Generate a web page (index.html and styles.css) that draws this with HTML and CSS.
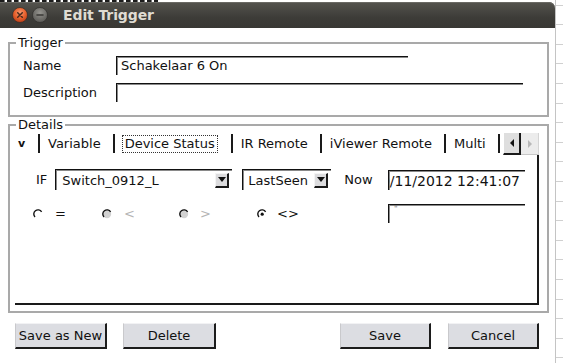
FILE: index.html
```html
<!DOCTYPE html>
<html>
<head>
<meta charset="utf-8">
<link rel="stylesheet" href="styles.css">
</head>
<body>
<div class="window">
  <div class="desk-top"></div>
  <div class="titlebar">
    <span class="wbtn">
      <svg width="16" height="16" viewBox="0 0 16 16"><defs><radialGradient id="cg" cx="50%" cy="35%" r="65%"><stop offset="0" stop-color="#f79a72"/><stop offset="0.55" stop-color="#e8622e"/><stop offset="1" stop-color="#b93e18"/></radialGradient></defs><circle cx="8" cy="8" r="7.5" fill="url(#cg)" stroke="#2a2926" stroke-width="0.6"/><path d="M5.7 5.7l4.6 4.6M10.3 5.7l-4.6 4.6" stroke="#4a2a1c" stroke-width="1.5" stroke-linecap="round"/></svg>
    </span>
    <span class="wbtn">
      <svg width="16" height="16" viewBox="0 0 16 16"><defs><radialGradient id="mg" cx="50%" cy="35%" r="65%"><stop offset="0" stop-color="#95948f"/><stop offset="1" stop-color="#5a5955"/></radialGradient></defs><circle cx="8" cy="8" r="7.5" fill="url(#mg)" stroke="#2a2926" stroke-width="0.6"/><path d="M5 8h6" stroke="#3a3936" stroke-width="1.6" stroke-linecap="round"/></svg>
    </span>
    <span class="title">Edit Trigger</span>
  </div>
  <div class="dialog">
    <fieldset class="group">
      <legend>Trigger</legend>
      <div class="form">
        <span class="lbl">Name</span><div class="input name">Schakelaar 6 On</div>
        <span class="lbl">Description</span><div class="input desc"></div>
      </div>
    </fieldset>
    <fieldset class="group">
      <legend>Details</legend>
      <div class="details-body">
        <div class="tabrow">
          <div class="tabs">
            <span class="tab first">v</span>
            <span class="tab">Variable</span>
            <span class="tab selected"><span class="focus">Device Status</span></span>
            <span class="tab">IR Remote</span>
            <span class="tab">iViewer Remote</span>
            <span class="tab">Multi</span>
            <span class="tab empty"></span>
          </div>
          <div class="scroll">
            <span class="sbtn prev"><svg width="6" height="8" viewBox="0 0 6 8"><path d="M5 0v8L1 4z" fill="#111"/></svg></span>
            <span class="sbtn next"><svg width="6" height="8" viewBox="0 0 6 8"><path d="M1 0v8l4-4z" fill="#b8b8b8"/></svg></span>
          </div>
        </div>
        <div class="panel">
          <div class="row cond">
            <span class="txt if">IF</span>
            <div class="combo device"><span class="ctext">Switch_0912_L</span><span class="arrow"><svg width="8" height="5" viewBox="0 0 8 5"><path d="M0 0h8L4 5z" fill="#111"/></svg></span></div>
            <div class="combo prop"><span class="ctext">LastSeen</span><span class="arrow"><svg width="8" height="5" viewBox="0 0 8 5"><path d="M0 0h8L4 5z" fill="#111"/></svg></span></div>
            <span class="txt now">Now</span>
            <div class="field time"><span class="ftext">9/11/2012 12:41:07</span></div>
          </div>
          <div class="row ops">
            <span class="radio r1"><svg width="10" height="10" viewBox="0 0 10 10"><circle cx="5" cy="5" r="4.2" fill="#fff"/><path d="M2 8A4.2 4.2 0 1 1 8.6 2.9" fill="none" stroke="#111" stroke-width="1.4"/></svg><span>=</span></span>
            <span class="radio r2 dis"><svg width="10" height="10" viewBox="0 0 10 10"><circle cx="5" cy="5" r="4.2" fill="#d2d2d2"/><path d="M2 8A4.2 4.2 0 1 1 8.6 2.9" fill="none" stroke="#111" stroke-width="1.4"/></svg><span>&lt;</span></span>
            <span class="radio r3 dis"><svg width="10" height="10" viewBox="0 0 10 10"><circle cx="5" cy="5" r="4.2" fill="#d2d2d2"/><path d="M2 8A4.2 4.2 0 1 1 8.6 2.9" fill="none" stroke="#111" stroke-width="1.4"/></svg><span>&gt;</span></span>
            <span class="radio r4"><svg width="10" height="10" viewBox="0 0 10 10"><circle cx="5" cy="5" r="4.2" fill="#fff"/><path d="M2 8A4.2 4.2 0 1 1 8.6 2.9" fill="none" stroke="#111" stroke-width="1.4"/><circle cx="5.2" cy="5.2" r="1.6" fill="#111"/></svg><span>&lt;&gt;</span></span>
            <div class="field value"><span class="mark">"</span></div>
          </div>
        </div>
      </div>
    </fieldset>
    <div class="actions">
      <div class="btns">
        <button class="btn w-new">Save as New</button>
        <button class="btn w-del">Delete</button>
      </div>
      <div class="btns right">
        <button class="btn w-save">Save</button>
        <button class="btn w-cancel">Cancel</button>
      </div>
    </div>
  </div>
</div>
<div class="desk-strip"></div>
</body>
</html>
```

FILE: styles.css
```css
html, body {
  margin: 0;
  padding: 0;
}
body {
  width: 563px;
  height: 363px;
  overflow: hidden;
  display: flex;
  background: #fff;
  font-family: "DejaVu Sans", "Liberation Sans", sans-serif;
  font-size: 13px;
  color: #111;
}
.window {
  width: 555px;
  flex: none;
  display: flex;
  flex-direction: column;
}
.desk-top {
  height: 2px;
  background: repeating-linear-gradient(90deg, #1c1c1c 0 4px, #777 4px 5px, #fff 5px 7px) 0 0 / 158px 2px no-repeat;
}
.titlebar {
  height: 26px;
  flex: none;
  display: flex;
  align-items: center;
  padding-left: 12px;
  background: linear-gradient(#54534e, #3d3c38 60%, #393834);
  border-top-right-radius: 6px;
  box-shadow: inset 0 1px 0 #6a6964;
}
.wbtn {
  width: 16px;
  height: 16px;
  margin-right: 4px;
  display: flex;
}
.title {
  margin-left: 11px;
  color: #dfdbd2;
  font-weight: bold;
  font-size: 14px;
  letter-spacing: -0.1px;
}
.dialog {
  flex: 1;
  background: #fff;
  padding-top: 7px;
}
.group {
  margin: 0 6px 0 8px;
  padding: 0;
  border: 2px solid #a9a9a9;
  min-width: 0;
}
.group legend {
  margin-left: 6px;
  padding: 0 2px;
  line-height: 16px;
  font-size: 13px;
}
.form {
  display: grid;
  grid-template-columns: 93px auto;
  row-gap: 8px;
  align-items: center;
  padding: 5px 0 13px 13px;
}
.input {
  height: 19px;
  box-sizing: border-box;
  border-top: 1px solid #111;
  border-left: 1px solid #111;
  box-shadow: inset 1px 1px 0 #8a8a8a;
  padding-left: 4px;
  line-height: 18px;
  justify-self: start;
}
.input.name { width: 292px; }
.input.desc { width: 407px; }

.details-body {
  padding: 0 8px 6px 5px;
}
.tabrow {
  display: flex;
  height: 22px;
}
.tabs {
  flex: 1;
  min-width: 0;
  display: flex;
  overflow: hidden;
}
.tab {
  flex: none;
  height: 19px;
  margin-top: 1px;
  line-height: 19px;
  border-left: 2px solid #1a1a1a;
  padding: 0 12px 0 8px;
  white-space: nowrap;
}
.tab.first {
  border-left: none;
  width: 23px;
  box-sizing: border-box;
  padding: 0 0 0 3px;
  font-weight: bold;
  font-size: 11px;
}
.tab.selected {
  padding: 0 13px 0 7px;
}
.tab.empty {
  width: 20px;
  padding: 0;
}
.focus {
  display: inline-block;
  border: 1px dotted #333;
  padding: 0 2px;
  line-height: 16px;
}
.scroll {
  width: 36px;
  flex: none;
  display: flex;
}
.sbtn {
  width: 18px;
  height: 22px;
  box-sizing: border-box;
  display: flex;
  align-items: center;
  justify-content: center;
}
.sbtn.prev {
  background: #dedede;
  border-left: 1px solid #fff;
  border-right: 2px solid #1a1a1a;
  border-bottom: 2px solid #1a1a1a;
}
.sbtn.next {
  background: #ececec;
  border-bottom: 1px solid #c8c8c8;
  border-right: 1px solid #d4d4d4;
}
.panel {
  height: 150px;
  box-sizing: border-box;
  border-right: 2px solid #1a1a1a;
  border-bottom: 2px solid #1a1a1a;
  padding: 14px 12px 0 0;
}
.row {
  display: flex;
  align-items: flex-start;
}
.row.cond {
  padding-left: 21px;
  height: 21px;
}
.txt {
  line-height: 21px;
}
.combo {
  height: 21px;
  box-sizing: border-box;
  display: flex;
  align-items: center;
  border-top: 1px solid #111;
  border-left: 1px solid #111;
  box-shadow: inset 1px 1px 0 #8a8a8a;
  padding: 0 3px 0 6px;
}
.combo.device { width: 177px; margin-left: 8px; }
.combo.prop { width: 89px; margin-left: 10px; padding-left: 5px; }
.ctext { flex: 1; white-space: nowrap; }
.arrow {
  width: 14px;
  height: 15px;
  box-sizing: border-box;
  background: #dcdcde;
  border-top: 1px solid #f4f4f4;
  border-left: 1px solid #f4f4f4;
  border-right: 2px solid #1a1a1a;
  border-bottom: 2px solid #1a1a1a;
  display: flex;
  align-items: center;
  justify-content: center;
}
.now { margin-left: 13px; }
.field {
  width: 137px;
  box-sizing: border-box;
  border-top: 1px solid #111;
  border-left: 1px solid #111;
  box-shadow: inset 1px 1px 0 #8a8a8a;
  overflow: hidden;
  display: flex;
  margin-left: auto;
}
.field.time {
  height: 20px;
  margin-top: 1px;
  justify-content: flex-end;
  align-items: center;
  padding-right: 5px;
  font-size: 14px;
}
.ftext { flex: none; white-space: nowrap; }
.row.ops {
  padding-left: 18px;
  margin-top: 14px;
  height: 19px;
  align-items: center;
}
.field.value {
  height: 19px;
  padding: 1px 0 0 5px;
  align-self: flex-start;
}
.mark {
  font-size: 8px;
  line-height: 8px;
  color: #777;
}
.radio {
  display: flex;
  align-items: center;
  gap: 12px;
  flex: none;
}
.radio svg { flex: none; }
.radio.r1 { width: 69px; }
.radio.r2 { width: 77px; }
.radio.r3 { width: 78px; gap: 11px; }
.radio.r4 { gap: 10px; }
.radio.dis span { color: #b4b4b4; }

.actions {
  display: flex;
  justify-content: space-between;
  padding: 0 16px 0 15px;
  margin-top: 10px;
}
.btns {
  display: flex;
  gap: 16px;
}
.btns.right { gap: 17px; }
.btn {
  height: 26px;
  box-sizing: border-box;
  margin: 0;
  padding: 0;
  background: #dcdde2;
  border: none;
  border-top: 1px solid #f2f2f4;
  border-left: 1px solid #c9c9cc;
  border-right: 2px solid #1c1c1c;
  border-bottom: 2px solid #1c1c1c;
  font-family: "DejaVu Sans", "Liberation Sans", sans-serif;
  font-size: 13px;
  color: #111;
}
.w-new { width: 92px; }
.w-del { width: 93px; }
.w-save { width: 91px; }
.w-cancel { width: 91px; }

.desk-strip {
  flex: 1;
  border-left: 1px solid #c4c4c4;
  background: repeating-linear-gradient(180deg, transparent 0 4.6px, #d0d0d0 4.6px 5.6px, transparent 5.6px 19.6px);
}
```
